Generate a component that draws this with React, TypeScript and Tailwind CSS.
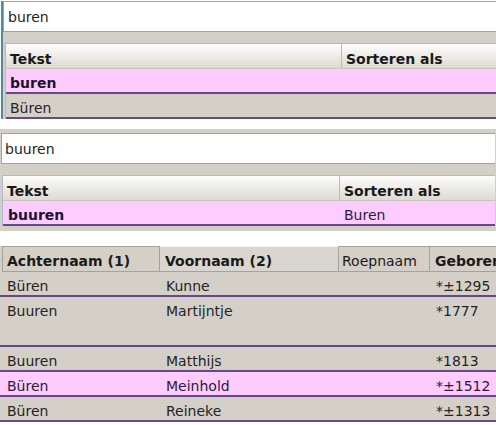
const PURPLE = "border-b-2 border-[#66488a]";

type Person = { last: string; first: string; born: string; pink?: boolean; tall?: boolean };

const people: Person[] = [
  { last: "Büren", first: "Kunne", born: "*±1295" },
  { last: "Buuren", first: "Martijntje", born: "*1777", tall: true },
  { last: "Buuren", first: "Matthijs", born: "*1813" },
  { last: "Büren", first: "Meinhold", born: "*±1512", pink: true },
  { last: "Büren", first: "Reineke", born: "*±1313" },
];

function SearchBox({ value, pad }: { value: string; pad: string }) {
  return (
    <div className={`h-[31px] border-y border-l border-[#a5a29b] bg-white pt-[7px] ${pad}`}>
      {value}
    </div>
  );
}

function LookupHeader({ firstWidth }: { firstWidth: string }) {
  return (
    <div className="flex h-[25px] border-b border-[#c9c5bd] bg-linear-to-b from-[#fdfdfc] to-[#dedad3] font-bold text-[#1a1a1a]">
      <div className={`${firstWidth} shrink-0 pl-[4px] pt-[7px]`}>Tekst</div>
      <div className="flex-1 border-l border-[#c0bcb4] pl-[4px] pt-[7px]">Sorteren als</div>
    </div>
  );
}

export default function App() {
  return (
    <div className="h-[425px] w-[496px] overflow-hidden bg-white font-['DejaVu_Sans',sans-serif] text-[14px] leading-[17px] text-[#242424]">
      {/* eerste zoekvak */}
      <div className="pt-px">
        <div className="ml-px border-l-2 border-[#4e8aa0] bg-[#d4d0c8]">
          <SearchBox value="buren" pad="pl-[4px]" />
          <div className="pl-[2px] pt-[11px]">
            <div className="border-l border-t border-[#aabdd1]">
              <LookupHeader firstWidth="w-[335px]" />
              <div className={`h-[25px] ${PURPLE} bg-[#ffccff] pl-[4px] pt-[6px] font-bold text-[#1d1233]`}>
                buren
              </div>
              <div className={`h-[25px] ${PURPLE} pl-[4px] pt-[6px]`}>Büren</div>
            </div>
          </div>
        </div>
      </div>

      {/* tweede zoekvak */}
      <div className="mt-[10px] bg-[#d4d0c8] px-px pb-[5px] pt-[4px]">
        <SearchBox value="buuren" pad="pl-[3px]" />
        <div className="pl-px pt-[11px]">
          <div className="border-l border-t border-[#aabdd1]">
            <LookupHeader firstWidth="w-[336px]" />
            <div className={`flex h-[25px] ${PURPLE} bg-[#ffccff] pt-[6px] text-[#2a1a44]`}>
              <div className="w-[336px] shrink-0 pl-[5px] font-bold text-[#1d1233]">buuren</div>
              <div className="flex-1 pl-[5px]">Buren</div>
            </div>
          </div>
        </div>
      </div>

      {/* personen */}
      <div className="mt-[15px] bg-[#d4d0c8]">
        <div className="flex h-[26px] pl-[2px] text-[#1a1a1a]">
          <div className="w-[158px] shrink-0 border-y border-l border-r border-[#a5a29b] pl-[4px] pt-[6px] font-bold">
            Achternaam (1)
          </div>
          <div className="w-[179px] shrink-0 border-b border-r border-t border-[#a5a29b] border-t-[#f2f0ec] bg-[#d9d6cf] pl-[5px] pt-[6px] font-bold">
            Voornaam (2)
          </div>
          <div className="w-[91px] shrink-0 border-y border-r border-[#a5a29b] pl-[3px] pt-[6px]">Roepnaam</div>
          <div className="min-w-0 flex-1 overflow-hidden whitespace-nowrap border-y border-[#a5a29b] pl-[5px] pt-[6px] font-bold">
            Geboren
          </div>
        </div>
        {people.map((p, i) => (
          <div
            key={i}
            className={`flex ${PURPLE} pt-[6px] ${p.tall ? "h-[50px]" : "h-[25px]"} ${
              p.pink ? "bg-[#ffccff] text-[#2a1a44]" : ""
            }`}
          >
            <div className="w-[160px] shrink-0 pl-[7px]">{p.last}</div>
            <div className="w-[179px] shrink-0 pl-[6px]">{p.first}</div>
            <div className="w-[91px] shrink-0" />
            <div className="flex-1 pl-[6px]">{p.born}</div>
          </div>
        ))}
      </div>
    </div>
  );
}
